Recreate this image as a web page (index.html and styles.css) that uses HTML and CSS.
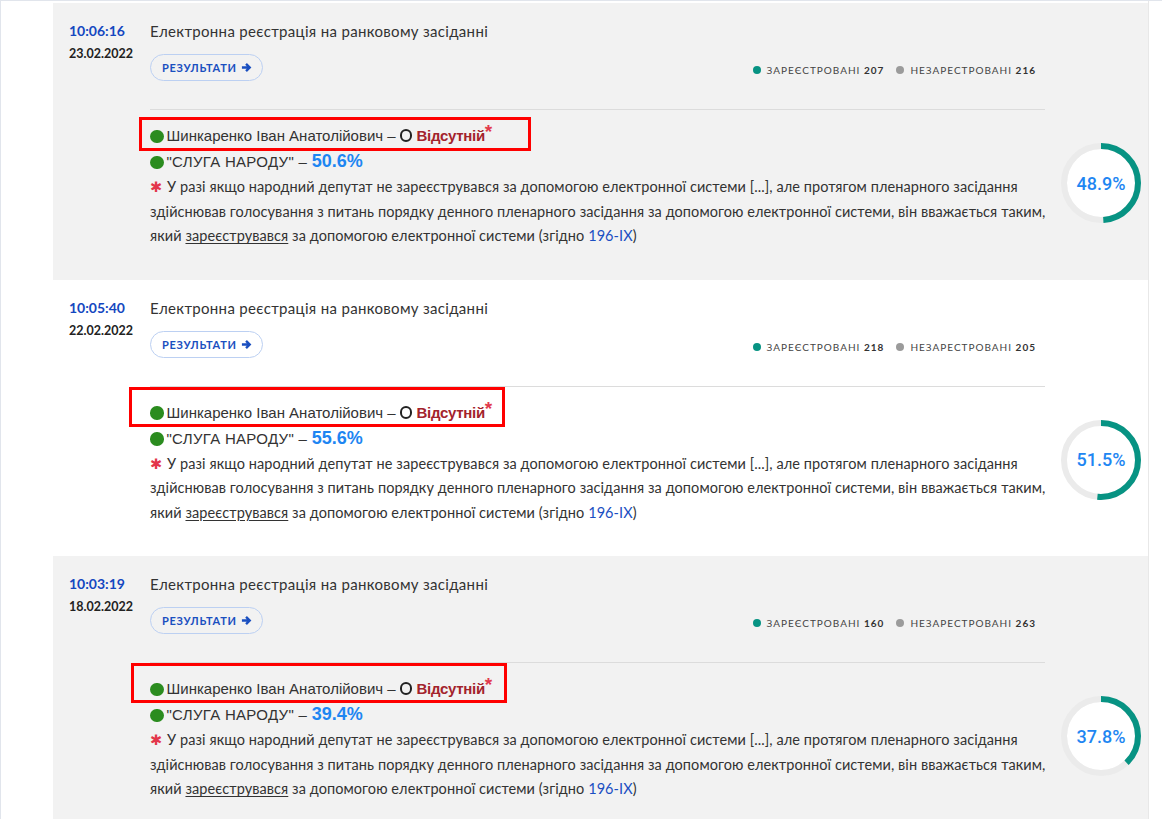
FILE: index.html
```html
<!DOCTYPE html>
<html lang="uk">
<head>
<meta charset="utf-8">
<title>Реєстрація</title>
<link rel="stylesheet" href="styles.css">
</head>
<body>
<div class="page">
  <div class="feed">

    <article class="vote vote--shade">
      <div class="when">
        <div class="time">10:06:16</div>
        <div class="date">23.02.2022</div>
      </div>
      <div class="head">
        <div class="title">Електронна реєстрація на ранковому засіданні</div>
        <div class="meta">
          <a class="btn" href="#">РЕЗУЛЬТАТИ <svg class="arrow" viewBox="0 0 12 12"><path d="M1 6h8M5.5 2l4 4-4 4"/></svg></a>
          <div class="legend">
            <span class="dot dot--teal"></span><span>Зареєстровані <b>207</b></span>
            <span class="dot dot--grey"></span><span>Незарестровані <b>216</b></span>
          </div>
        </div>
      </div>
      <div class="info">
        <div class="person"><span class="mark mark--a"></span><span class="gdot"></span>Шинкаренко Іван Анатолійович – <span class="ring"></span> <b class="absent">Відсутній</b><span class="star">*</span></div>
        <div class="party"><span class="gdot"></span>"СЛУГА НАРОДУ" – <b class="pct">50.6%</b></div>
        <p class="note"><span class="ast">✱</span> У разі якщо народний депутат не зареєструвався за допомогою електронної системи [...], але протягом пленарного засідання здійснював голосування з питань порядку денного пленарного засідання за допомогою електронної системи, він вважається таким, який <u>зареєструвався</u> за допомогою електронної системи (згідно <a href="#">196-IX</a>)</p>
      </div>
      <div class="donut">
        <svg viewBox="0 0 80 80"><circle class="fill" cx="40" cy="40" r="34"/><circle class="track" cx="40" cy="40" r="37"/><circle class="arc" cx="40" cy="40" r="37" stroke-dasharray="113.7 300" transform="rotate(-90 40 40)"/></svg>
        <span class="donut-val">48.9%</span>
      </div>
    </article>

    <article class="vote">
      <div class="when">
        <div class="time">10:05:40</div>
        <div class="date">22.02.2022</div>
      </div>
      <div class="head">
        <div class="title">Електронна реєстрація на ранковому засіданні</div>
        <div class="meta">
          <a class="btn" href="#">РЕЗУЛЬТАТИ <svg class="arrow" viewBox="0 0 12 12"><path d="M1 6h8M5.5 2l4 4-4 4"/></svg></a>
          <div class="legend">
            <span class="dot dot--teal"></span><span>Зареєстровані <b>218</b></span>
            <span class="dot dot--grey"></span><span>Незарестровані <b>205</b></span>
          </div>
        </div>
      </div>
      <div class="info">
        <div class="person"><span class="mark mark--b"></span><span class="gdot"></span>Шинкаренко Іван Анатолійович – <span class="ring"></span> <b class="absent">Відсутній</b><span class="star">*</span></div>
        <div class="party"><span class="gdot"></span>"СЛУГА НАРОДУ" – <b class="pct">55.6%</b></div>
        <p class="note"><span class="ast">✱</span> У разі якщо народний депутат не зареєструвався за допомогою електронної системи [...], але протягом пленарного засідання здійснював голосування з питань порядку денного пленарного засідання за допомогою електронної системи, він вважається таким, який <u>зареєструвався</u> за допомогою електронної системи (згідно <a href="#">196-IX</a>)</p>
      </div>
      <div class="donut">
        <svg viewBox="0 0 80 80"><circle class="fill" cx="40" cy="40" r="34"/><circle class="track" cx="40" cy="40" r="37"/><circle class="arc" cx="40" cy="40" r="37" stroke-dasharray="119.7 300" transform="rotate(-90 40 40)"/></svg>
        <span class="donut-val">51.5%</span>
      </div>
    </article>

    <article class="vote vote--shade">
      <div class="when">
        <div class="time">10:03:19</div>
        <div class="date">18.02.2022</div>
      </div>
      <div class="head">
        <div class="title">Електронна реєстрація на ранковому засіданні</div>
        <div class="meta">
          <a class="btn" href="#">РЕЗУЛЬТАТИ <svg class="arrow" viewBox="0 0 12 12"><path d="M1 6h8M5.5 2l4 4-4 4"/></svg></a>
          <div class="legend">
            <span class="dot dot--teal"></span><span>Зареєстровані <b>160</b></span>
            <span class="dot dot--grey"></span><span>Незарестровані <b>263</b></span>
          </div>
        </div>
      </div>
      <div class="info">
        <div class="person"><span class="mark mark--c"></span><span class="gdot"></span>Шинкаренко Іван Анатолійович – <span class="ring"></span> <b class="absent">Відсутній</b><span class="star">*</span></div>
        <div class="party"><span class="gdot"></span>"СЛУГА НАРОДУ" – <b class="pct">39.4%</b></div>
        <p class="note"><span class="ast">✱</span> У разі якщо народний депутат не зареєструвався за допомогою електронної системи [...], але протягом пленарного засідання здійснював голосування з питань порядку денного пленарного засідання за допомогою електронної системи, він вважається таким, який <u>зареєструвався</u> за допомогою електронної системи (згідно <a href="#">196-IX</a>)</p>
      </div>
      <div class="donut">
        <svg viewBox="0 0 80 80"><circle class="fill" cx="40" cy="40" r="34"/><circle class="track" cx="40" cy="40" r="37"/><circle class="arc" cx="40" cy="40" r="37" stroke-dasharray="87.9 300" transform="rotate(-90 40 40)"/></svg>
        <span class="donut-val">37.8%</span>
      </div>
    </article>

  </div>
</div>
</body>
</html>
```
FILE: styles.css
```css
* { box-sizing: border-box; }
html, body { margin: 0; background: #fff; }
body { font-family: Lato, "Noto Sans", sans-serif; color: #333; }

.page {
  border-top: 1px solid #e1e5ec;
  border-left: 1px solid #e1e5ec;
  min-height: 100vh;
  padding-left: 52px;
}
.feed {
  width: 1096px;
  border-right: 1px solid #e8e8e8;
  padding-top: 2px;
}

.vote {
  display: grid;
  grid-template-columns: 81px 895px 1fr;
  grid-template-areas:
    "when head ."
    ".    info donut";
  padding: 18px 0 31px 16px;
  background: #fff;
}
.vote--shade { background: #f2f2f2; }

.when { grid-area: when; }
.time { font-size: 14px; line-height: 20px; font-weight: 700; color: #1447c0; }
.date { font-size: 12.5px; line-height: 20px; font-weight: 700; color: #222; margin-top: 3px; }

.head {
  grid-area: head;
  padding-bottom: 28px;
  border-bottom: 1px solid #dcdcdc;
}
.title { font-size: 15px; line-height: 20px; letter-spacing: 0.32px; color: #333; }
.meta {
  display: flex;
  justify-content: space-between;
  align-items: center;
  margin-top: 13px;
  padding-right: 9px;
}
.btn {
  display: inline-flex;
  align-items: center;
  gap: 4px;
  height: 27px;
  padding: 0 10px 0 11px;
  border: 1px solid #bcd0f2;
  border-radius: 14px;
  font-size: 11px;
  font-weight: 700;
  letter-spacing: 0.7px;
  color: #1a4fc0;
  text-decoration: none;
}
.arrow { width: 11px; height: 11px; fill: none; stroke: #1a4fc0; stroke-width: 2.6; }

.legend {
  display: flex;
  align-items: center;
  padding-top: 5px;
  font-size: 10px;
  letter-spacing: 1px;
  text-transform: uppercase;
  color: #444;
}
.legend b { color: #333; }
.dot { width: 8px; height: 8px; border-radius: 50%; margin-right: 6px; }
.dot--teal { background: #079383; }
.dot--grey { background: #9b9b9b; margin-left: 12px; }

.info { grid-area: info; padding-top: 13px; }
.person, .party {
  position: relative;
  font-family: "Liberation Sans", Arial, sans-serif;
  font-size: 15px;
  line-height: 26px;
  height: 26px;
  color: #333;
}
.party { letter-spacing: 0.3px; }
.gdot {
  display: inline-block;
  width: 13.5px;
  height: 13.5px;
  border-radius: 50%;
  background: #2b8c1f;
  vertical-align: -2px;
  margin-right: 3px;
}
.ring {
  display: inline-block;
  width: 12.6px;
  height: 12.6px;
  border: 2.2px solid #222;
  border-radius: 50%;
  vertical-align: -1px;
}
.absent { color: #a3232c; letter-spacing: -0.3px; }
.star {
  color: #e23a4c;
  font-weight: 700;
  font-size: 19px;
  position: relative;
  top: -3px;
  line-height: 0;
}
.pct { color: #1e86f2; font-size: 18px; letter-spacing: 0; line-height: 0; }

.mark {
  position: absolute;
  border: 3px solid #ff0000;
  pointer-events: none;
}
.mark--a { left: -11px; top: -6px; width: 392px; height: 34px; }
.mark--b { left: -21px; top: -13px; width: 376px; height: 40px; }
.mark--c { left: -19px; top: -13px; width: 376px; height: 40px; }

.note {
  margin: 0 -10px 0 0;
  font-size: 14.5px;
  line-height: 24.5px;
  letter-spacing: 0.08px;
  color: #333;
}
.ast { color: #e3364a; font-family: "DejaVu Sans", sans-serif; margin-right: 1px; line-height: 0; }
.note u { text-underline-offset: 2px; }
.note a { color: #1b4fc2; text-decoration: none; }

.donut {
  grid-area: donut;
  align-self: center;
  justify-self: end;
  margin: 8px 7px 0 0;
  display: grid;
  width: 80px;
  height: 80px;
}
.donut > * { grid-area: 1 / 1; }
.donut svg { width: 80px; height: 80px; }
.donut .fill { fill: #fff; }
.donut .track { fill: none; stroke: #ebebeb; stroke-width: 6; }
.donut .arc { fill: none; stroke: #079383; stroke-width: 6; }
.donut-val {
  place-self: center;
  font-family: Roboto, sans-serif;
  font-size: 18px;
  font-weight: 500;
  color: #1e86f2;
}
```
